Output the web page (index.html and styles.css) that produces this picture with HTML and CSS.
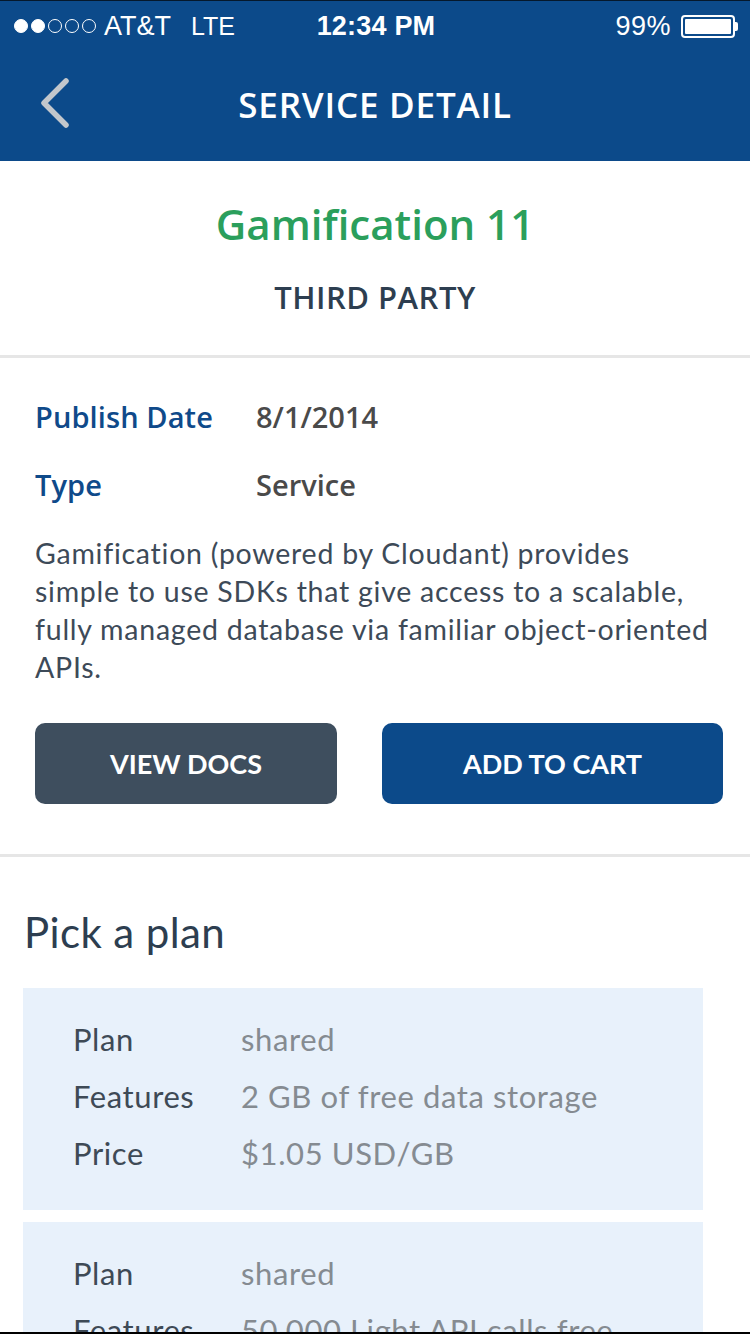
FILE: index.html
```html
<!DOCTYPE html>
<html>
<head>
<meta charset="utf-8">
<link rel="stylesheet" href="styles.css">
</head>
<body>
<div class="app">
  <header class="header">
    <div class="status">
      <div class="status-left">
        <span class="dots"><i class="dot on"></i><i class="dot on"></i><i class="dot"></i><i class="dot"></i><i class="dot"></i></span>
        <span class="carrier">AT&amp;T</span>
        <span class="net">LTE</span>
      </div>
      <div class="status-time">12:34 PM</div>
      <div class="status-right">
        <span class="pct">99%</span>
        <span class="battery"><span class="battery-fill"></span></span><span class="battery-tip"></span>
      </div>
    </div>
    <div class="nav">
      <svg class="back" width="34" height="52" viewBox="0 0 34 52"><path d="M29 4 L7 26 L29 48" fill="none" stroke="#c3c7cc" stroke-width="5.5" stroke-linecap="round" stroke-linejoin="round"/></svg>
      <h1 class="nav-title">SERVICE DETAIL</h1>
    </div>
  </header>

  <section class="hero">
    <h2 class="name">Gamification 11</h2>
    <div class="vendor">THIRD PARTY</div>
  </section>

  <section class="details">
    <div class="meta">
      <div class="meta-label">Publish Date</div><div class="meta-value">8/1/2014</div>
      <div class="meta-label">Type</div><div class="meta-value">Service</div>
    </div>
    <p class="desc">Gamification (powered by Cloudant) provides<br>simple to use SDKs that give access to a scalable,<br>fully managed database via familiar object-oriented<br>APIs.</p>
    <div class="actions">
      <button class="btn btn-docs">VIEW DOCS</button>
      <button class="btn btn-cart">ADD TO CART</button>
    </div>
  </section>

  <section class="plans">
    <h3 class="plans-title">Pick a plan</h3>
    <div class="plan">
      <div class="plan-label">Plan</div><div class="plan-value">shared</div>
      <div class="plan-label">Features</div><div class="plan-value">2 GB of free data storage</div>
      <div class="plan-label">Price</div><div class="plan-value">$1.05 USD/GB</div>
    </div>
    <div class="plan">
      <div class="plan-label">Plan</div><div class="plan-value">shared</div>
      <div class="plan-label">Features</div><div class="plan-value">50,000 Light API calls free</div>
      <div class="plan-label">Price</div><div class="plan-value">$0.015 USD/100 calls</div>
    </div>
  </section>
</div>
<div class="frame-bottom"></div>
</body>
</html>
```

FILE: styles.css
```css
* { box-sizing: border-box; }
html, body { margin: 0; padding: 0; }
body {
  width: 750px;
  height: 1334px;
  overflow: hidden;
  background: #fff;
  font-family: Lato, "Open Sans", sans-serif;
}
.app { width: 750px; }

.header {
  background: #0c4a8a;
  height: 161px;
  border-top: 1px solid #05182c;
  color: #fff;
}
.status {
  height: 50px;
  display: flex;
  align-items: center;
  justify-content: space-between;
  padding: 0 12px 0 14px;
  font-family: "Liberation Sans", Arial, sans-serif;
  font-size: 27px;
}
.status-left { display: flex; align-items: center; width: 240px; }
.dots { display: flex; gap: 3px; margin-right: 8px; }
.dot {
  width: 14px; height: 14px; border-radius: 50%;
  border: 1.5px solid #fff; display: block;
}
.dot.on { background: #fff; }
.carrier { margin-right: 20px; }
.net { font-size: 25px; }
.status-time { font-weight: bold; font-size: 27px; letter-spacing: 0.2px; }
.status-right { display: flex; align-items: center; width: 240px; justify-content: flex-end; }
.pct { margin-right: 10px; letter-spacing: 0.5px; }
.battery {
  width: 54px; height: 23px; border: 2px solid #fff; border-radius: 4px;
  padding: 2px; display: block;
}
.battery-fill { display: block; width: 100%; height: 100%; background: #fff; border-radius: 1px; }
.battery-tip { width: 3px; height: 9px; background: #fff; border-radius: 0 2px 2px 0; display: block; }

.nav {
  height: 110px;
  display: flex;
  align-items: center;
  justify-content: center;
  position: relative;
  padding-bottom: 4px;
}
.back { position: absolute; left: 37px; top: 26px; }
.nav-title {
  margin: 0;
  font-size: 35px;
  font-weight: 600;
  font-family: "Open Sans", sans-serif;
  letter-spacing: 0.8px;
}

.hero {
  height: 197px;
  border-bottom: 3px solid #e6e6e6;
  text-align: center;
  padding-top: 38px;
}
.name {
  margin: 0;
  font-family: "Open Sans", sans-serif;
  font-weight: 600;
  font-size: 42px;
  line-height: 50px;
  color: #2b9f5c;
}
.vendor {
  margin-top: 30px;
  font-family: "Open Sans", sans-serif;
  font-weight: 600;
  font-size: 31px;
  line-height: 36px;
  letter-spacing: 0.5px;
  color: #2d3e50;
}

.details {
  padding: 41px 20px 50px 35px;
  border-bottom: 3px solid #e6e6e6;
}
.meta {
  display: grid;
  grid-template-columns: 221px 1fr;
  row-gap: 32px;
  font-family: "Open Sans", sans-serif;
  font-weight: 600;
  font-size: 29px;
  line-height: 36px;
}
.meta-label { color: #0f4a8a; letter-spacing: 0.1px; }
.meta-value { color: #4a4a4a; }
.desc {
  margin: 31px 0 0 0;
  font-size: 28.5px;
  line-height: 38px;
  letter-spacing: 0.75px;
  color: #3d4a58;
  white-space: nowrap;
}
.actions {
  margin-top: 37px;
  display: flex;
  gap: 45px;
}
.btn {
  height: 81px;
  border: none;
  border-radius: 10px;
  color: #fff;
  font-family: Lato, "Open Sans", sans-serif;
  font-weight: 700;
  font-size: 27px;
}
.btn-docs { width: 302px; background: #3e4e5e; }
.btn-cart { width: 341px; background: #0c4a8a; }

.plans { padding: 51px 47px 0 23px; }
.plans-title {
  margin: 0 0 32px 1px;
  font-weight: 400;
  font-size: 42px;
  line-height: 48px;
  letter-spacing: 0.4px;
  color: #2d3e50;
}
.plan {
  background: #e8f1fb;
  padding: 31px 20px 37px 50px;
  display: grid;
  grid-template-columns: 168px 1fr;
  row-gap: 17px;
  font-size: 31px;
  line-height: 40px;
  letter-spacing: 0.6px;
  margin-bottom: 12px;
}
.plan-label { color: #3e4a56; }
.plan-value { color: #858b91; }

.frame-bottom {
  position: fixed;
  left: 0; right: 0; bottom: 0;
  height: 2px;
  background: #000;
}
```
